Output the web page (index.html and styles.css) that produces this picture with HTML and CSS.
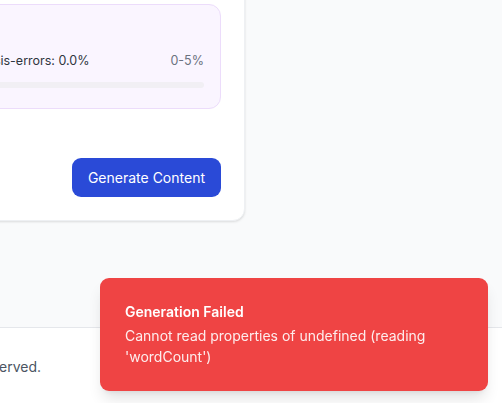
FILE: index.html
```html
<!DOCTYPE html>
<html lang="en">
<head>
<meta charset="utf-8">
<title>AI Content Generator</title>
<link rel="stylesheet" href="styles.css">
</head>
<body>
<main class="main">
  <section class="card">
    <div class="metrics">
      <div class="metrics-title">Metrics</div>
      <div class="metric-row">
        <span class="metric-label">Grammar &amp; Analysis-errors: 0.0%</span>
        <span class="metric-range">0-5%</span>
      </div>
      <div class="bar"><div class="bar-fill" style="width:0%"></div></div>
    </div>
    <div class="actions">
      <button class="btn-primary" type="button">Generate Content</button>
    </div>
  </section>
</main>
<footer class="footer">
  <div class="footer-inner">
    <p class="footer-text">© 2024 AI Content Generator. All rights reserved.</p>
  </div>
</footer>
<div class="toast" role="alert">
  <div class="toast-title">Generation Failed</div>
  <div class="toast-msg">Cannot read properties of undefined (reading 'wordCount')</div>
</div>
</body>
</html>
```

FILE: styles.css
```css
* { box-sizing: border-box; }
html, body { margin: 0; padding: 0; }
body {
  background: #f9fafb;
  font-family: Inter, "Noto Sans", sans-serif;
  color: #111827;
  width: 502px;
  height: 403px;
  overflow: hidden;
}
.main {
  height: 327px;
  padding-top: 1px;
}
.card {
  width: 395px;
  margin-left: -150px;
  margin-top: -21px;
  background: #fff;
  border-radius: 12px;
  border: 1px solid #eef0f3;
  box-shadow: 0 1px 3px rgba(0,0,0,0.08), 0 1px 2px rgba(0,0,0,0.05);
  padding: 23px;
}
.metrics {
  background: #faf5ff;
  border: 1px solid #ecdcfb;
  border-radius: 12px;
  padding: 16px 16px 20px;
}
.metrics-title {
  font-size: 14px;
  line-height: 20px;
  font-weight: 600;
  color: #581c87;
}
.metric-row {
  margin-top: 12px;
  display: flex;
  justify-content: space-between;
  align-items: center;
  font-size: 12.5px;
  line-height: 16px;
}
.metric-label { color: #2f3640; white-space: nowrap; }
.metric-range { color: #6b7280; }
.bar {
  margin-top: 13px;
  height: 6px;
  border-radius: 3px;
  background: #f1eff4;
  overflow: hidden;
}
.bar-fill { height: 100%; background: #a855f7; }
.actions {
  margin-top: 49px;
  display: flex;
  justify-content: flex-end;
}
.btn-primary {
  font-family: Inter, "Noto Sans", sans-serif;
  font-size: 14px;
  line-height: 20px;
  color: #fff;
  background: #2a4ad7;
  border: 0;
  border-radius: 9px;
  padding: 10px 16px 9px;
  font-weight: 400;
}
.footer {
  background: #fff;
  border-top: 1px solid #e5e7eb;
  height: 76px;
  padding-top: 29px;
}
.footer-inner {
  width: 400px;
  margin-left: -359px;
  text-align: right;
}
.footer-text {
  margin: 0;
  font-size: 14px;
  line-height: 20px;
  color: #4b5563;
  white-space: nowrap;
}
.toast {
  position: fixed;
  right: 14px;
  bottom: 12px;
  width: 388px;
  background: #ef4444;
  color: #fff;
  border-radius: 9px;
  padding: 24px 24px 24px 25px;
  box-shadow: 0 10px 15px -3px rgba(0,0,0,0.12), 0 4px 6px -4px rgba(0,0,0,0.1);
}
.toast-title {
  font-size: 14px;
  line-height: 20px;
  font-weight: 600;
}
.toast-msg {
  margin-top: 3px;
  font-size: 14px;
  line-height: 21px;
  opacity: 0.9;
}
```
